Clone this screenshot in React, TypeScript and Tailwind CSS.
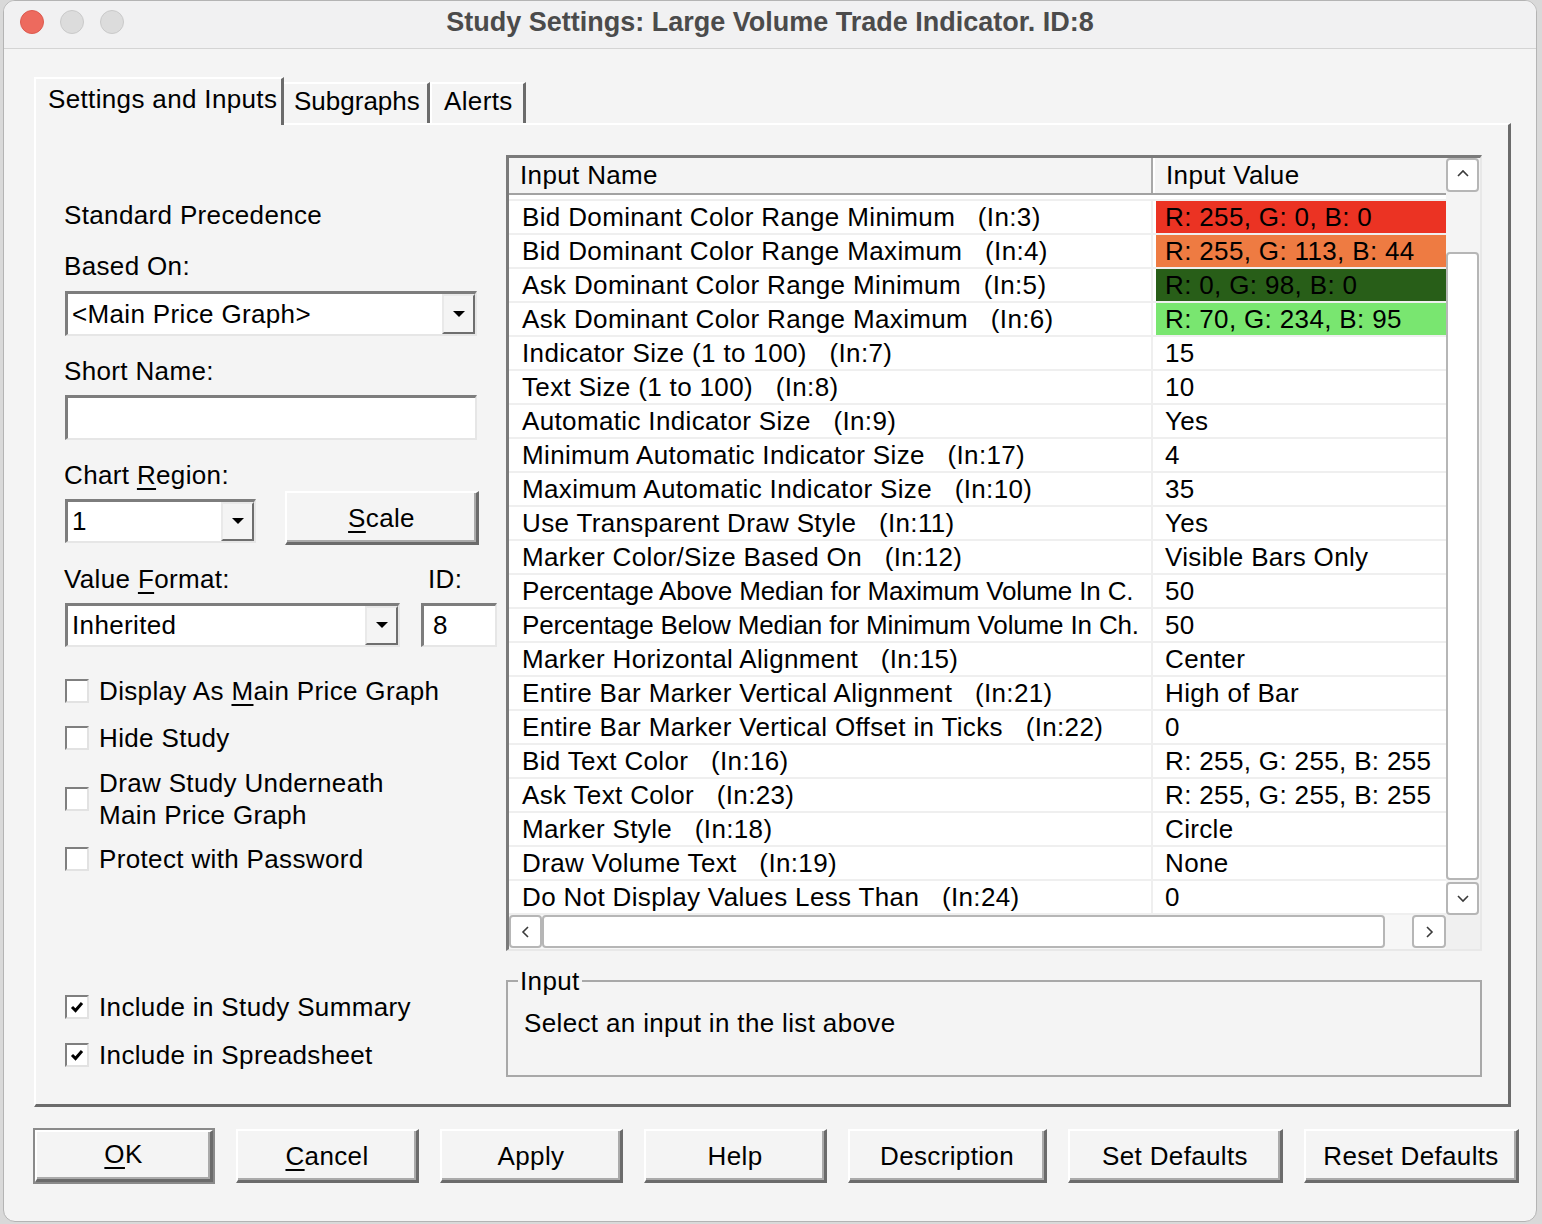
import React from "react";

const font = "font-['Liberation_Sans',Arial,sans-serif]";

const raised =
  "bg-[#f4f4f4] border-t-2 border-l-2 border-t-white border-l-white border-b-[3px] border-r-[3px] border-b-[#6b6b6b] border-r-[#6b6b6b] shadow-[inset_-2px_-2px_0_#aaaaaa]";
const sunken =
  "bg-white border-t-[3px] border-l-[3px] border-t-[#7d7d7d] border-l-[#7d7d7d] border-b-2 border-r-2 border-b-[#e6e6e6] border-r-[#e6e6e6]";

type Row = [string, string, string, string?];

const rows: Row[] = [
  ["Bid Dominant Color Range Minimum", "   (In:3)", "R: 255, G: 0, B: 0", "#eb3323"],
  ["Bid Dominant Color Range Maximum", "   (In:4)", "R: 255, G: 113, B: 44", "#ee7b42"],
  ["Ask Dominant Color Range Minimum", "   (In:5)", "R: 0, G: 98, B: 0", "#285e18"],
  ["Ask Dominant Color Range Maximum", "   (In:6)", "R: 70, G: 234, B: 95", "#79e670"],
  ["Indicator Size (1 to 100)", "   (In:7)", "15"],
  ["Text Size (1 to 100)", "   (In:8)", "10"],
  ["Automatic Indicator Size", "   (In:9)", "Yes"],
  ["Minimum Automatic Indicator Size", "   (In:17)", "4"],
  ["Maximum Automatic Indicator Size", "   (In:10)", "35"],
  ["Use Transparent Draw Style", "   (In:11)", "Yes"],
  ["Marker Color/Size Based On", "   (In:12)", "Visible Bars Only"],
  ["Percentage Above Median for Maximum Volume In C.", "", "50"],
  ["Percentage Below Median for Minimum Volume In Ch.", "", "50"],
  ["Marker Horizontal Alignment", "   (In:15)", "Center"],
  ["Entire Bar Marker Vertical Alignment", "   (In:21)", "High of Bar"],
  ["Entire Bar Marker Vertical Offset in Ticks", "   (In:22)", "0"],
  ["Bid Text Color", "   (In:16)", "R: 255, G: 255, B: 255"],
  ["Ask Text Color", "   (In:23)", "R: 255, G: 255, B: 255"],
  ["Marker Style", "   (In:18)", "Circle"],
  ["Draw Volume Text", "   (In:19)", "None"],
  ["Do Not Display Values Less Than", "   (In:24)", "0"],
];

function DownTri() {
  return (
    <svg width="12" height="7" viewBox="0 0 12 7">
      <path d="M0 0h12L6 6z" fill="#000" />
    </svg>
  );
}

function ArrowBtn() {
  return (
    <div className="w-[33px] h-full bg-[#f4f4f4] border-t-2 border-l-2 border-t-[#e9e9e9] border-l-[#e9e9e9] border-b-2 border-r-2 border-b-[#6e6e6e] border-r-[#6e6e6e] flex items-center justify-center shrink-0">
      <DownTri />
    </div>
  );
}

function Chevron({ dir }: { dir: "up" | "down" | "left" | "right" }) {
  const pts =
    dir === "up"
      ? "2,8 7,3 12,8"
      : dir === "down"
      ? "2,4 7,9 12,4"
      : dir === "left"
      ? "9,2 4,7 9,12"
      : "5,2 10,7 5,12";
  return (
    <svg width="14" height="14" viewBox="0 0 14 14">
      <polyline points={pts} fill="none" stroke="#3a3a3a" strokeWidth="1.6" />
    </svg>
  );
}

function ScrollBtn({ dir, className }: { dir: "up" | "down" | "left" | "right"; className: string }) {
  return (
    <div className={`bg-white border-2 border-[#b6b6b6] rounded-[4px] flex items-center justify-center shrink-0 ${className}`}>
      <Chevron dir={dir} />
    </div>
  );
}

function Check({
  checked,
  children,
  className,
}: {
  checked?: boolean;
  children: React.ReactNode;
  className: string;
}) {
  return (
    <div className={`flex items-center gap-[10px] ${className}`}>
      <div className="w-[24px] h-[24px] bg-white border-t-2 border-l-2 border-t-[#7f7f7f] border-l-[#7f7f7f] border-b-2 border-r-2 border-b-[#e2e2e2] border-r-[#e2e2e2] flex items-center justify-center shrink-0">
        {checked && (
          <svg width="14" height="14" viewBox="0 0 14 14">
            <path d="M2 7l3.5 3.5L12 3" stroke="#000" strokeWidth="3" fill="none" />
          </svg>
        )}
      </div>
      <div className="leading-[32px]">{children}</div>
    </div>
  );
}

function Btn({ children, className }: { children: React.ReactNode; className: string }) {
  return (
    <div className={`${raised} h-[54px] flex items-center justify-center ${className}`}>
      <span className="leading-[30px]">{children}</span>
    </div>
  );
}

const U = ({ c }: { c: string }) => <span className="underline underline-offset-[4px] decoration-[2px]">{c}</span>;

export default function App() {
  return (
    <div className={`w-[1542px] h-[1224px] bg-[#d9d9d9] pl-[3px] ${font} text-black text-[26px] tracking-[0.35px]`}>
      <div className="w-[1534px] h-[1222px] bg-[#f4f4f4] rounded-[12px] border border-[#b4b4b4] overflow-hidden flex flex-col">
        {/* Title bar */}
        <div className="h-[48px] shrink-0 bg-[#f1f1f2] border-b border-[#d4d4d4] flex items-center pb-[6px]">
          <div className="w-[121px] pl-[16px] flex gap-[16px] items-center shrink-0">
            <div className="w-[24px] h-[24px] rounded-full bg-[#ed6a5e] border border-[#dc5a4f]" />
            <div className="w-[24px] h-[24px] rounded-full bg-[#dcdcdc] border border-[#c9c9c9]" />
            <div className="w-[24px] h-[24px] rounded-full bg-[#dcdcdc] border border-[#c9c9c9]" />
          </div>
          <div className="flex-1 text-center text-[27px] font-bold text-[#4b4b4b] leading-[32px] tracking-normal">
            Study Settings: Large Volume Trade Indicator. ID:8
          </div>
          <div className="w-[121px] shrink-0" />
        </div>

        {/* Tabs */}
        <div className="ml-[30px] mt-[28px] h-[46px] flex items-end shrink-0">
          <div className="relative z-10 w-[250px] h-[48px] mb-[-2px] bg-[#f4f4f4] border-t-2 border-l-2 border-t-white border-l-white border-r-[3px] border-r-[#6b6b6b] pl-[12px] pt-[5px] leading-[30px]">
            Settings and Inputs
          </div>
          <div className="w-[146px] h-[41px] bg-[#f4f4f4] border-t-2 border-t-white border-r-[3px] border-r-[#6b6b6b] pl-[10px] pt-[2px] leading-[30px] tracking-normal">
            Subgraphs
          </div>
          <div className="w-[96px] h-[41px] bg-[#f4f4f4] border-t-2 border-l-2 border-t-white border-l-white border-r-[3px] border-r-[#6b6b6b] pl-[12px] pt-[2px] leading-[30px]">
            Alerts
          </div>
        </div>

        {/* Panel */}
        <div className="ml-[30px] w-[1477px] h-[984px] shrink-0 border-t-2 border-l-2 border-t-white border-l-white border-r-[3px] border-b-[3px] border-r-[#6b6b6b] border-b-[#6b6b6b] flex pl-[28px]">
          {/* Left column */}
          <div className="w-[442px] flex flex-col shrink-0">
            <div className="mt-[75px] leading-[30px]">Standard Precedence</div>
            <div className="mt-[21px] leading-[30px]">Based On:</div>
            <div className={`${sunken} mt-[10px] ml-[1px] w-[412px] h-[45px] flex items-stretch`}>
              <div className="flex-1 pl-[4px] leading-[40px]">&lt;Main Price Graph&gt;</div>
              <ArrowBtn />
            </div>
            <div className="mt-[20px] leading-[30px]">Short Name:</div>
            <div className={`${sunken} mt-[9px] ml-[1px] w-[412px] h-[45px]`} />
            <div className="mt-[20px] leading-[30px]">
              Chart <U c="R" />
              egion:
            </div>
            <div className="mt-[1px] flex items-start">
              <div className={`${sunken} mt-[8px] ml-[1px] w-[191px] h-[44px] flex items-stretch`}>
                <div className="flex-1 pl-[4px] leading-[39px]">1</div>
                <ArrowBtn />
              </div>
              <Btn className="ml-[29px] w-[194px]">
                <U c="S" />
                cale
              </Btn>
            </div>
            <div className="mt-[19px] flex leading-[30px]">
              <div className="w-[364px]">
                Value <U c="F" />
                ormat:
              </div>
              <div>ID:</div>
            </div>
            <div className="mt-[9px] flex">
              <div className={`${sunken} ml-[1px] w-[335px] h-[44px] flex items-stretch`}>
                <div className="flex-1 pl-[4px] leading-[39px]">Inherited</div>
                <ArrowBtn />
              </div>
              <div className={`${sunken} ml-[21px] w-[76px] h-[44px] pl-[9px] leading-[39px]`}>8</div>
            </div>
            <Check className="mt-[28px] ml-[1px]">
              Display As <U c="M" />
              ain Price Graph
            </Check>
            <Check className="mt-[15px] ml-[1px]">Hide Study</Check>
            <Check className="mt-[13px] ml-[1px]">
              Draw Study Underneath
              <br />
              Main Price Graph
            </Check>
            <Check className="mt-[12px] ml-[1px]">Protect with Password</Check>
            <Check checked className="mt-[116px] ml-[1px]">
              Include in Study Summary
            </Check>
            <Check checked className="mt-[16px] ml-[1px]">
              Include in Spreadsheet
            </Check>
          </div>

          {/* Right column */}
          <div className="w-[976px] flex flex-col shrink-0">
            <div className="mt-[30px] w-[976px] h-[796px] border-t-[3px] border-l-[3px] border-t-[#7a7a7a] border-l-[#7a7a7a] border-b-2 border-r-2 border-b-[#e8e8e8] border-r-[#e8e8e8] flex flex-col bg-white">
              <div className="flex h-[757px]">
                {/* List content */}
                <div className="w-[937px] flex flex-col overflow-hidden">
                  <div className="h-[37px] shrink-0 flex bg-[#f4f4f4] border-b-2 border-b-[#a2a2a2]">
                    <div className="w-[644px] border-r-2 border-r-[#a8a8a8] pl-[11px] leading-[35px]">Input Name</div>
                    <div className="flex-1 border-l-2 border-l-white pl-[11px] leading-[35px]">Input Value</div>
                  </div>
                  <div className="h-[6px] shrink-0 bg-white border-b-2 border-b-[#efefef]" />
                  {rows.map(([name, id, val, color], i) => (
                    <div key={i} className="h-[34px] shrink-0 flex border-b-2 border-b-[#efefef] bg-white">
                      <div
                        className={`w-[644px] shrink-0 border-r-2 border-r-[#efefef] pl-[13px] leading-[33px] whitespace-pre overflow-hidden ${
                          id === "" ? "tracking-[-0.15px]" : ""
                        }`}
                      >
                        {name + id}
                      </div>
                      <div
                        className="flex-1 ml-[3px] pl-[9px] leading-[33px] whitespace-pre overflow-hidden"
                        style={color ? { backgroundColor: color } : undefined}
                      >
                        {val}
                      </div>
                    </div>
                  ))}
                </div>
                {/* Vertical scrollbar */}
                <div className="w-[34px] flex flex-col bg-[#f4f4f4] pr-[1px]">
                  <ScrollBtn dir="up" className="h-[34px]" />
                  <div className="h-[60px]" />
                  <div className="h-[628px] bg-white border-2 border-[#b6b6b6] rounded-[4px]" />
                  <div className="h-[2px]" />
                  <ScrollBtn dir="down" className="h-[33px]" />
                </div>
              </div>
              {/* Horizontal scrollbar */}
              <div className="h-[34px] flex bg-[#f7f7f7]">
                <ScrollBtn dir="left" className="w-[33px] h-[33px]" />
                <div className="w-[843px] h-[33px] bg-white border-2 border-[#b6b6b6] rounded-[4px]" />
                <div className="w-[27px]" />
                <ScrollBtn dir="right" className="w-[34px] h-[33px]" />
                <div className="w-[34px] bg-[#f0f0f0]" />
              </div>
            </div>

            <fieldset className="mt-[15px] w-[976px] h-[111px] border-2 border-[#a8a8a8] px-[10px]">
              <legend className="px-[2px] leading-[30px]">Input</legend>
              <div className="pl-[6px] mt-[12px] leading-[30px]">Select an input in the list above</div>
            </fieldset>
          </div>
        </div>

        {/* Bottom buttons */}
        <div className="ml-[29px] mt-[22px] flex gap-[21px] shrink-0">
          <div className="w-[182px] h-[56px] border-2 border-[#8a8a8a] mt-[-1px]">
            <div className={`${raised} h-full flex items-center justify-center`}>
              <span className="leading-[30px] mt-[-4px]">
                <U c="O" />K
              </span>
            </div>
          </div>
          <Btn className="w-[183px]">
            <U c="C" />
            ancel
          </Btn>
          <Btn className="w-[183px]">Apply</Btn>
          <Btn className="w-[183px]">Help</Btn>
          <Btn className="w-[199px]">Description</Btn>
          <Btn className="w-[215px]">Set Defaults</Btn>
          <Btn className="w-[215px]">Reset Defaults</Btn>
        </div>
      </div>
    </div>
  );
}
